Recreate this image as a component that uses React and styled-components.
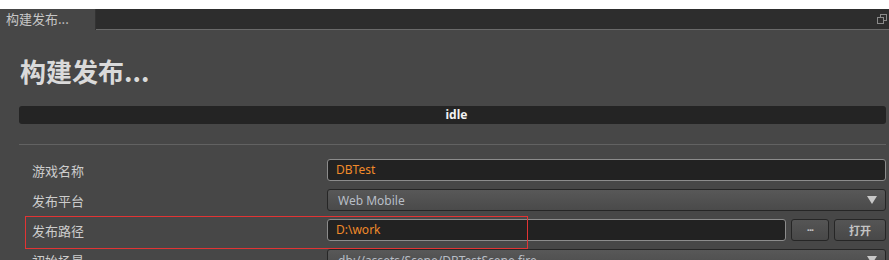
import React from 'react';
import styled, { createGlobalStyle } from 'styled-components';

const GlobalStyle = createGlobalStyle`
  body {
    margin: 0;
    background: #ffffff;
    font-family: "Noto Sans", "Noto Sans CJK SC", sans-serif;
  }
`;

const Root = styled.div`
  position: relative;
  width: 889px;
  height: 260px;
  padding-top: 9px;
  box-sizing: border-box;
  overflow: hidden;
`;

const TabBar = styled.div`
  display: flex;
  align-items: stretch;
  height: 21px;
  background: #2d2d2d;
`;

const Tab = styled.div`
  width: 96px;
  box-sizing: border-box;
  padding-left: 6px;
  background: #464646;
  color: #c6c6c6;
  font-size: 13px;
  line-height: 20px;
  font-family: "Noto Sans CJK SC", sans-serif;
  border-right: 1px solid #333;
`;

const TabFill = styled.div`
  flex: 1;
  display: flex;
  align-items: center;
  justify-content: flex-end;
  padding-right: 2px;
  border-bottom: 1px solid #6a6a6a;
`;

const Panel = styled.div`
  background: #474747;
  height: 230px;
  padding: 24px 3px 0 19px;
  box-sizing: border-box;
`;

const Title = styled.h1`
  margin: 0 0 0 1px;
  font-size: 26px;
  line-height: 34px;
  font-weight: bold;
  color: #dadada;
  font-family: "Noto Sans CJK SC", sans-serif;
`;

const StatusBar = styled.div`
  margin-top: 18px;
  height: 18px;
  border-radius: 3px;
  background: #242424;
  color: #f2f2f2;
  font-size: 12px;
  font-weight: bold;
  line-height: 18px;
  text-align: center;
  padding-left: 8px;
`;

const Separator = styled.div`
  margin-top: 20px;
  height: 1px;
  background: #626262;
`;

const Form = styled.div`
  display: flex;
  flex-direction: column;
  gap: 8px;
  padding-top: 14px;
`;

const Row = styled.div`
  display: flex;
  align-items: center;
  height: 22px;
`;

const Label = styled.div`
  width: 308px;
  padding-left: 13px;
  box-sizing: border-box;
  color: #cdcdcd;
  font-size: 13px;
  font-family: "Noto Sans CJK SC", sans-serif;
`;

const Field = styled.div`
  flex: 1;
  display: flex;
  gap: 5px;
  height: 22px;
`;

const Input = styled.div`
  flex: 1;
  box-sizing: border-box;
  border: 1px solid #8c8c8c;
  border-radius: 3px;
  background: #222222;
  color: #f08a2a;
  font-size: 12px;
  line-height: 20px;
  padding-left: 8px;
`;

const Select = styled.div`
  flex: 1;
  display: flex;
  align-items: center;
  justify-content: space-between;
  box-sizing: border-box;
  border: 1px solid #262626;
  border-radius: 3px;
  background: linear-gradient(#585858, #4a4a4a);
  color: #b8bec6;
  font-size: 12px;
  padding: 0 8px 0 10px;
  overflow: hidden;
  white-space: nowrap;
`;

const Arrow = styled.span`
  width: 0;
  height: 0;
  border-left: 5px solid transparent;
  border-right: 5px solid transparent;
  border-top: 8px solid #c8c8c8;
`;

const Button = styled.div`
  width: ${(p) => p.w}px;
  box-sizing: border-box;
  border: 1px solid #262626;
  border-radius: 3px;
  background: linear-gradient(#555555, #484848);
  color: #c4c4c4;
  font-size: 11px;
  font-weight: bold;
  line-height: 20px;
  text-align: center;
  letter-spacing: ${(p) => (p.tight ? '-1px' : '0')};
  font-family: ${(p) => (p.tight ? '"Noto Sans", sans-serif' : '"Noto Sans CJK SC", sans-serif')};
`;

const Highlight = styled.div`
  position: absolute;
  left: 25px;
  top: 216px;
  width: 503px;
  height: 33px;
  box-sizing: border-box;
  border: 1px solid #e23434;
  pointer-events: none;
`;

const RestoreIcon = () => (
  <svg width="10" height="10" viewBox="0 0 10 10">
    <rect x="3.5" y="0.5" width="6" height="6" fill="none" stroke="#8a8a8a" />
    <rect x="0.5" y="3.5" width="6" height="6" fill="#2d2d2d" stroke="#8a8a8a" />
  </svg>
);

export default function App() {
  return (
    <Root>
      <GlobalStyle />
      <TabBar>
        <Tab>构建发布...</Tab>
        <TabFill>
          <RestoreIcon />
        </TabFill>
      </TabBar>
      <Panel>
        <Title>构建发布...</Title>
        <StatusBar>idle</StatusBar>
        <Separator />
        <Form>
          <Row>
            <Label>游戏名称</Label>
            <Field>
              <Input>DBTest</Input>
            </Field>
          </Row>
          <Row>
            <Label>发布平台</Label>
            <Field>
              <Select>
                Web Mobile
                <Arrow />
              </Select>
            </Field>
          </Row>
          <Row>
            <Label>发布路径</Label>
            <Field>
              <Input>D:\work</Input>
              <Button w={38} tight>
                ···
              </Button>
              <Button w={52}>打开</Button>
            </Field>
          </Row>
          <Row>
            <Label>初始场景</Label>
            <Field>
              <Select>
                db://assets/Scene/DBTestScene.fire
                <Arrow />
              </Select>
            </Field>
          </Row>
        </Form>
      </Panel>
      <Highlight />
    </Root>
  );
}
